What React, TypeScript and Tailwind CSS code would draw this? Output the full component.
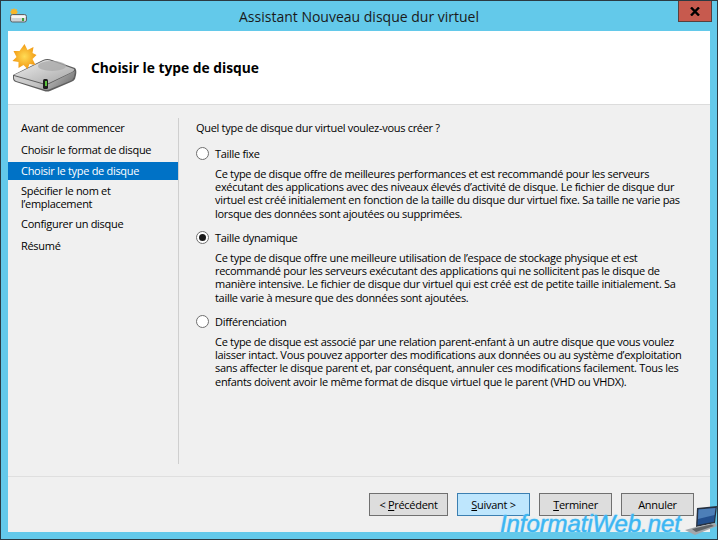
const font = { fontFamily: '"Open Sans", "Noto Sans", sans-serif' };

function DiskIcon() {
  return (
    <svg width="66" height="50" viewBox="0 0 66 50">
      <defs>
        <linearGradient id="dt" x1="0" y1="0" x2="1" y2="1">
          <stop offset="0" stopColor="#efefef" />
          <stop offset="1" stopColor="#a5a5a5" />
        </linearGradient>
        <linearGradient id="df" x1="0" y1="0" x2="1" y2="0.3">
          <stop offset="0" stopColor="#d6d6d6" />
          <stop offset="0.55" stopColor="#c2c2c2" />
          <stop offset="1" stopColor="#808080" />
        </linearGradient>
        <radialGradient id="ds">
          <stop offset="0" stopColor="#ffdc55" />
          <stop offset="1" stopColor="#f29a14" />
        </radialGradient>
      </defs>
      <path d="M1 31 L31 16 Q35 14 40 16 L63 24 Q65 26 64 31 L63 35 Q62 37 59 38 L38 47 Q35 48 32 47 L4 38 Q1 37 1 34 Z" fill="#5e5e5e" />
      <path d="M2 31 L31 17 Q35 15 40 17 L62 25 Q63 27 58 29 L37 39 Q34 40 30 39 Z" fill="url(#dt)" />
      <ellipse cx="40" cy="22" rx="14" ry="5" fill="#a9a9a9" opacity="0.75" />
      <path d="M2 32 L30 40 Q34 41 37 40 L63 27 L62 33 Q61 36 58 37 L37 45.5 Q35 46 32 45.5 L4 37 Q2 36 2 34 Z" fill="url(#df)" />
      <rect x="31" y="35" width="5" height="10" rx="1.5" fill="#1e1e1e" />
      <rect x="33" y="37" width="2" height="5" fill="#5ac23c" />
      <g transform="translate(12.5 13)">
        <path d="M0 -13 L3 -7 L9 -10 L8 -4 L12 -2 L8 2 L11 8 L5 7 L3 12 L-1 8 L-6 11 L-6 5 L-12 4 L-8 0 L-11 -6 L-5 -6 Z" fill="url(#ds)" />
      </g>
    </svg>
  );
}

function SmallDisk() {
  return (
    <svg width="17" height="15" viewBox="0 0 17 15">
      <circle cx="4" cy="4" r="3" fill="#f8b62a" />
      <path d="M4 0V8M0 4H8M1 1L7 7M7 1L1 7" stroke="#f8b62a" strokeWidth="0.8" />
      <rect x="0.5" y="6.5" width="16" height="7.5" rx="2" fill="#cfd3d6" stroke="#5d6367" />
      <rect x="1.5" y="7.5" width="14" height="2.5" rx="1" fill="#f5f5f5" />
      <rect x="12" y="10" width="2" height="3" fill="#3e9d38" />
    </svg>
  );
}

function Radio({ checked }: { checked?: boolean }) {
  return (
    <span className="flex h-[13px] w-[13px] shrink-0 items-center justify-center rounded-full border border-[#6f6f6f] bg-white">
      {checked && <span className="h-[7px] w-[7px] rounded-full bg-[#1a1a1a]" />}
    </span>
  );
}

function Option({ label, checked, lines }: { label: string; checked?: boolean; lines: string[] }) {
  return (
    <div>
      <div className="flex h-[16px] items-center gap-[6px] leading-[16px]">
        <Radio checked={checked} />
        <span>{label}</span>
      </div>
      <div className="mt-[5px] pl-[19px] leading-[13.33px]">
        {lines.map((l) => (
          <div key={l} className="whitespace-nowrap">{l}</div>
        ))}
      </div>
    </div>
  );
}

function Btn({ w, children, active }: { w: string; children: React.ReactNode; active?: boolean }) {
  return (
    <div className={`flex h-[23px] items-center justify-center border pt-[1px] ${w} ${active ? "border-[#3c7fb1] bg-[#bee6fd]" : "border-[#707070] bg-[#dddddd]"}`}>
      <span>{children}</span>
    </div>
  );
}

function Laptop() {
  return (
    <svg width="34" height="30" viewBox="0 0 34 30">
      <path d="M13 2 L33 0 L31 17 L12 21 Z" fill="#26303f" />
      <path d="M14.5 3.5 L31.5 2 L30 15.8 L13.5 19 Z" fill="#23508f" />
      <path d="M14.5 3.5 L31.5 2 L30.5 9 L14 13 Z" fill="#4d7fb8" />
      <path d="M12 21 L31 17 L33 20 L11 29 L1 24 Z" fill="#a3a7ab" />
      <path d="M8 23 L27 18.5 L30 20 L12 26 Z" fill="#5f6367" />
    </svg>
  );
}

export default function App() {
  return (
    <div className="relative flex h-[540px] w-[718px] flex-col overflow-hidden border border-[#2b3a42] bg-[#63c9ea] text-[11px] tracking-[-0.3px] text-black" style={font}>
      <div className="relative flex h-[30px] shrink-0 items-center justify-center text-[14px] tracking-normal text-[#1a1a1a]">
        <span className="absolute left-[9px] top-[7px]"><SmallDisk /></span>
        <span>Assistant Nouveau disque dur virtuel</span>
        <span className="absolute right-[5px] top-[0px] flex h-[21px] w-[34px] items-center justify-center border border-[#57403f] border-t-0 bg-[#c75a4e]">
          <svg width="10" height="9" viewBox="0 0 10 9"><path d="M1 0.5L9 8.5M9 0.5L1 8.5" stroke="#000" strokeWidth="2.4" /></svg>
        </span>
      </div>
      <div className="mx-[7px] flex min-h-0 flex-1 flex-col bg-[#f0f0f0]">
        <div className="flex h-[74px] shrink-0 items-center gap-[13px] border-b border-[#dcdcdc] bg-white pl-[4px]">
          <div className="mt-[2px] w-[66px] shrink-0"><DiskIcon /></div>
          <span className="mt-[2px] text-[13.8px] font-bold tracking-normal">Choisir le type de disque</span>
        </div>
        <div className="flex h-[371px] shrink-0 pt-[13px]">
          <div className="w-[170px] shrink-0">
            <div className="flex h-[21px] items-center pl-[13px]">Avant de commencer</div>
            <div className="flex h-[23px] items-center pl-[13px]">Choisir le format de disque</div>
            <div className="flex h-[18px] items-center bg-[#0072c6] pl-[13px] text-white">Choisir le type de disque</div>
            <div className="mt-[4px] pl-[13px] leading-[13px]">Spécifier le nom et<br />l’emplacement</div>
            <div className="mt-[3px] flex h-[22px] items-center pl-[13px]">Configurer un disque</div>
            <div className="flex h-[22px] items-center pl-[13px]">Résumé</div>
          </div>
          <div className="h-[346px] w-[1px] shrink-0 bg-[#cfcfcf]" />
          <div className="flex flex-col gap-[9.7px] pl-[17px] pt-[2px]">
            <div className="leading-[16px]">Quel type de disque dur virtuel voulez-vous créer ?</div>
            <Option label="Taille fixe" lines={[
              "Ce type de disque offre de meilleures performances et est recommandé pour les serveurs",
              "exécutant des applications avec des niveaux élevés d’activité de disque. Le fichier de disque dur",
              "virtuel est créé initialement en fonction de la taille du disque dur virtuel fixe. Sa taille ne varie pas",
              "lorsque des données sont ajoutées ou supprimées.",
            ]} />
            <Option label="Taille dynamique" checked lines={[
              "Ce type de disque offre une meilleure utilisation de l’espace de stockage physique et est",
              "recommandé pour les serveurs exécutant des applications qui ne sollicitent pas le disque de",
              "manière intensive. Le fichier de disque dur virtuel qui est créé est de petite taille initialement. Sa",
              "taille varie à mesure que des données sont ajoutées.",
            ]} />
            <Option label="Différenciation" lines={[
              "Ce type de disque est associé par une relation parent-enfant à un autre disque que vous voulez",
              "laisser intact. Vous pouvez apporter des modifications aux données ou au système d’exploitation",
              "sans affecter le disque parent et, par conséquent, annuler ces modifications facilement. Tous les",
              "enfants doivent avoir le même format de disque virtuel que le parent (VHD ou VHDX).",
            ]} />
          </div>
        </div>
        <div className="flex flex-1 justify-end gap-[9px] border-t border-[#dfdfdf] pr-[16px] pt-[16px]">
          <Btn w="w-[79px]">&lt; <u>P</u>récédent</Btn>
          <Btn w="w-[73px]" active><u>S</u>uivant &gt;</Btn>
          <Btn w="w-[73px]"><u>T</u>erminer</Btn>
          <Btn w="w-[73px]">Annuler</Btn>
        </div>
      </div>
      <div className="h-[7px] shrink-0" />
      <span className="absolute bottom-[2px] left-[499px] text-[24px] italic leading-[26px] tracking-[-0.1px] text-[#3db6f2] [text-shadow:0_0_2px_#a8e6ff]" style={{ fontFamily: '"Liberation Sans", sans-serif', WebkitTextStroke: "0.4px #3db6f2" }}>InformatiWeb.net</span>
      <span className="absolute bottom-[3px] right-[-1px]"><Laptop /></span>
    </div>
  );
}
